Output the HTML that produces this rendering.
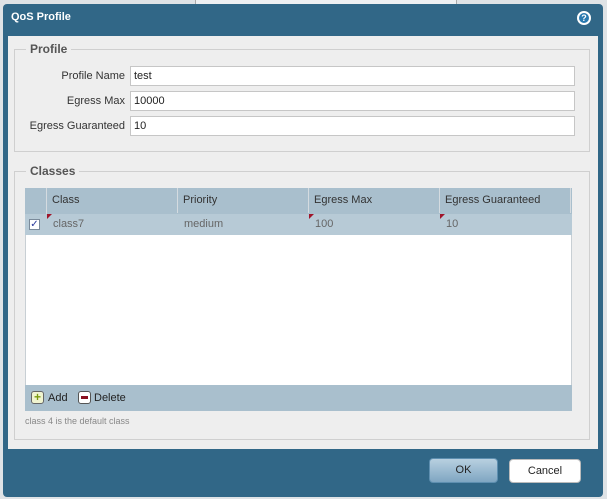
<html><head><style>
body{margin:0;width:607px;height:499px;background:#dfe3e6;font-family:"Liberation Sans",sans-serif;font-size:11px;position:relative;overflow:hidden}
.a{position:absolute}
.dlg{left:3px;top:4px;width:600px;height:493px;background:#316787;border-radius:4px}
.content{left:8px;top:36px;width:590px;height:413px;background:#eeeeee}
.fs{border:1px solid #cfcfcf;}
.lg{background:#eeeeee;color:#555;font-weight:bold;font-size:12px;padding:0 4px}
.lbl{color:#333;text-align:right;width:120px;left:5px}
.inp{left:130px;width:440px;height:18px;background:#fff;border:1px solid #c6c6c6;line-height:18px;padding-left:3px;color:#222}
.hd{color:#333;line-height:25px;padding-left:5px;border-right:1px solid #d4dbe0;box-sizing:border-box}
.cell{color:#666;line-height:21px;padding-left:6px;box-sizing:border-box}
.tri{width:0;height:0;border-top:5px solid #a0142a;border-right:5px solid transparent}
</style></head><body>
<div class="a" style="left:195px;top:0;width:260px;height:4px;background:#eef0f2;border-left:1px solid #aaa;border-right:1px solid #aaa"></div>
<div class="a dlg"></div>
<div class="a" style="left:11px;top:11px;color:#fff;font-weight:bold;font-size:11px">QoS Profile</div>
<div class="a" style="left:577px;top:11px;width:14px;height:14px;border-radius:50%;background:#2a7ab0;border:2px solid #fff;box-sizing:border-box;color:#fff;font-size:9px;font-weight:bold;text-align:center;line-height:10px">?</div>
<div class="a content"></div>
<div class="a fs" style="left:14px;top:49px;width:574px;height:101px"></div>
<div class="a lg" style="left:26px;top:42px">Profile</div>
<div class="a lbl" style="top:70px">Profile Name</div>
<div class="a lbl" style="top:95px">Egress Max</div>
<div class="a lbl" style="top:120px">Egress Guaranteed</div>
<div class="a inp" style="top:66px">test</div>
<div class="a inp" style="top:91px">10000</div>
<div class="a inp" style="top:116px">10</div>
<div class="a fs" style="left:14px;top:171px;width:574px;height:267px"></div>
<div class="a lg" style="left:26px;top:164px">Classes</div>
<div class="a" style="left:25px;top:188px;width:547px;height:223px;background:#fff;border:1px solid #c8cfd4;box-sizing:border-box"></div>
<div class="a" style="left:25px;top:188px;width:547px;height:26px;background:#a9bfcd"></div>
<div class="a" style="left:25px;top:214px;width:547px;height:21px;background:#b7cad6"></div>
<div class="a hd" style="left:25px;top:188px;width:22px;height:26px"></div>
<div class="a hd" style="left:47px;top:188px;width:131px">Class</div>
<div class="a hd" style="left:178px;top:188px;width:131px">Priority</div>
<div class="a hd" style="left:309px;top:188px;width:131px">Egress Max</div>
<div class="a hd" style="left:440px;top:188px;width:131px">Egress Guaranteed</div>
<div class="a" style="left:29px;top:219px;width:11px;height:11px;background:#fff;border:1px solid #7a8a9a;box-sizing:border-box;color:#2a3a9a;font-size:10px;line-height:10px;text-align:center">✓</div>
<div class="a cell" style="left:47px;top:214px">class7</div>
<div class="a cell" style="left:178px;top:214px">medium</div>
<div class="a cell" style="left:309px;top:214px">100</div>
<div class="a cell" style="left:440px;top:214px">10</div>
<div class="a tri" style="left:47px;top:214px"></div>
<div class="a tri" style="left:309px;top:214px"></div>
<div class="a tri" style="left:440px;top:214px"></div>
<div class="a" style="left:25px;top:385px;width:547px;height:26px;background:#a9bfcd"></div>
<div class="a" style="left:31px;top:391px;width:13px;height:13px;border-radius:3px;background:#f0f4d0;border:1px solid #666;box-sizing:border-box;color:#7a9a10;font-weight:bold;font-size:12px;line-height:11px;text-align:center">+</div>
<div class="a" style="left:48px;top:392px;color:#222;font-size:11px">Add</div>
<div class="a" style="left:78px;top:391px;width:13px;height:13px;border-radius:3px;background:#fff;border:1px solid #555;box-sizing:border-box"><div style="margin:4px 2px;height:3px;background:#8a1020"></div></div>
<div class="a" style="left:94px;top:392px;color:#222;font-size:11px">Delete</div>
<div class="a" style="left:25px;top:416px;color:#888;font-size:9px">class 4 is the default class</div>
<div class="a" style="left:429px;top:458px;width:69px;height:25px;border-radius:4px;background:linear-gradient(#b8d0e0,#7fa6c2);border:1px solid #5e8fb0;box-sizing:border-box;text-align:center;line-height:23px;color:#222">OK</div>
<div class="a" style="left:509px;top:459px;width:72px;height:24px;border-radius:4px;background:#fff;border:1px solid #bbb;box-sizing:border-box;text-align:center;line-height:22px;color:#222">Cancel</div>
</body></html>
